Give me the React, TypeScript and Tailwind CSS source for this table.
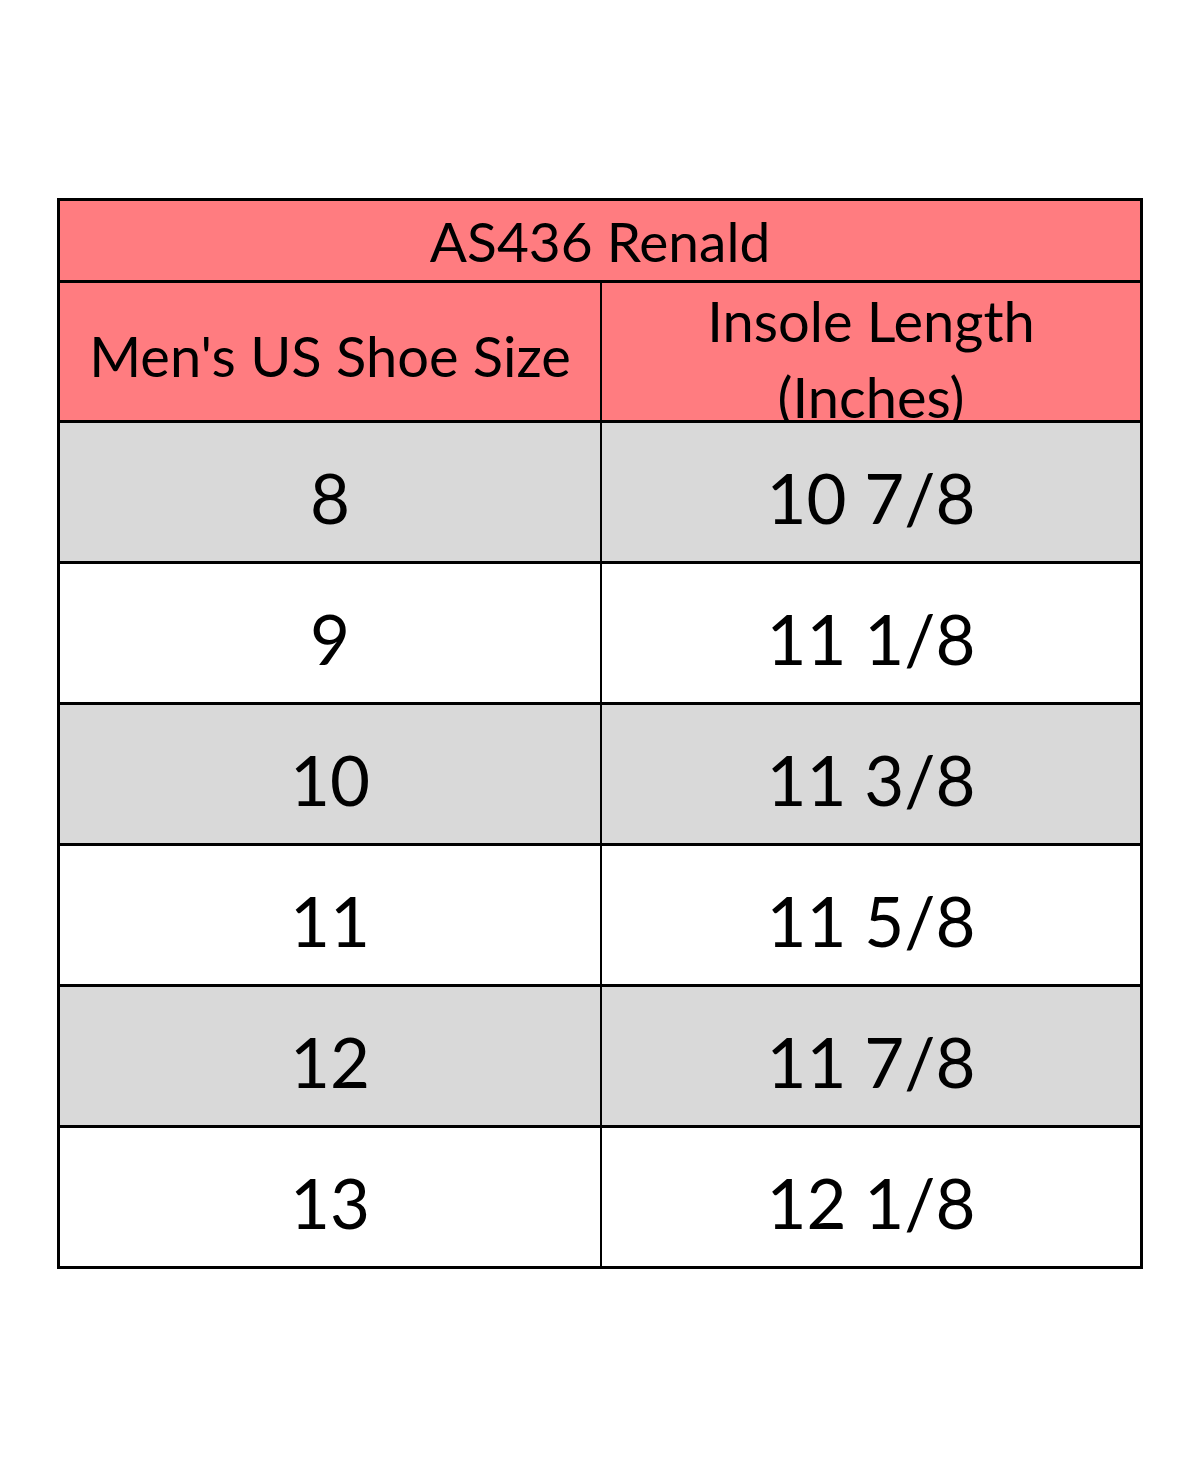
const rows = [
  ["8", "10 7/8"],
  ["9", "11 1/8"],
  ["10", "11 3/8"],
  ["11", "11 5/8"],
  ["12", "11 7/8"],
  ["13", "12 1/8"],
];

export default function App() {
  return (
    <div className="min-h-[1466px] w-[1200px] bg-white pt-[198px] pl-[57px] font-['Lato',sans-serif] text-black">
      <div className="w-[1086px] border-[3px] border-black">
        <div className="flex h-[79px] items-center justify-center bg-[#ff7c80] pt-[2px] text-[55px] leading-none">
          AS436 Renald
        </div>
        <div className="flex h-[140px] border-t-[3px] border-black bg-[#ff7c80] text-[56px]">
          <div className="flex w-[540px] items-center justify-center pt-[8px] leading-none">Men's US Shoe Size</div>
          <div className="w-[2px] bg-black" />
          <div className="flex flex-1 flex-col items-center overflow-hidden leading-[76px]">
            <span>Insole Length</span>
            <span>(Inches)</span>
          </div>
        </div>
        {rows.map(([size, len], i) => (
          <div
            key={size}
            className={`flex h-[141px] border-t-[3px] border-black text-[69px] leading-none ${i % 2 === 0 ? "bg-[#d9d9d9]" : "bg-white"}`}
          >
            <div className="flex w-[540px] items-center justify-center pt-[10px]">{size}</div>
            <div className="w-[2px] bg-black" />
            <div className="flex flex-1 items-center justify-center pt-[10px]">{len}</div>
          </div>
        ))}
      </div>
    </div>
  );
}
